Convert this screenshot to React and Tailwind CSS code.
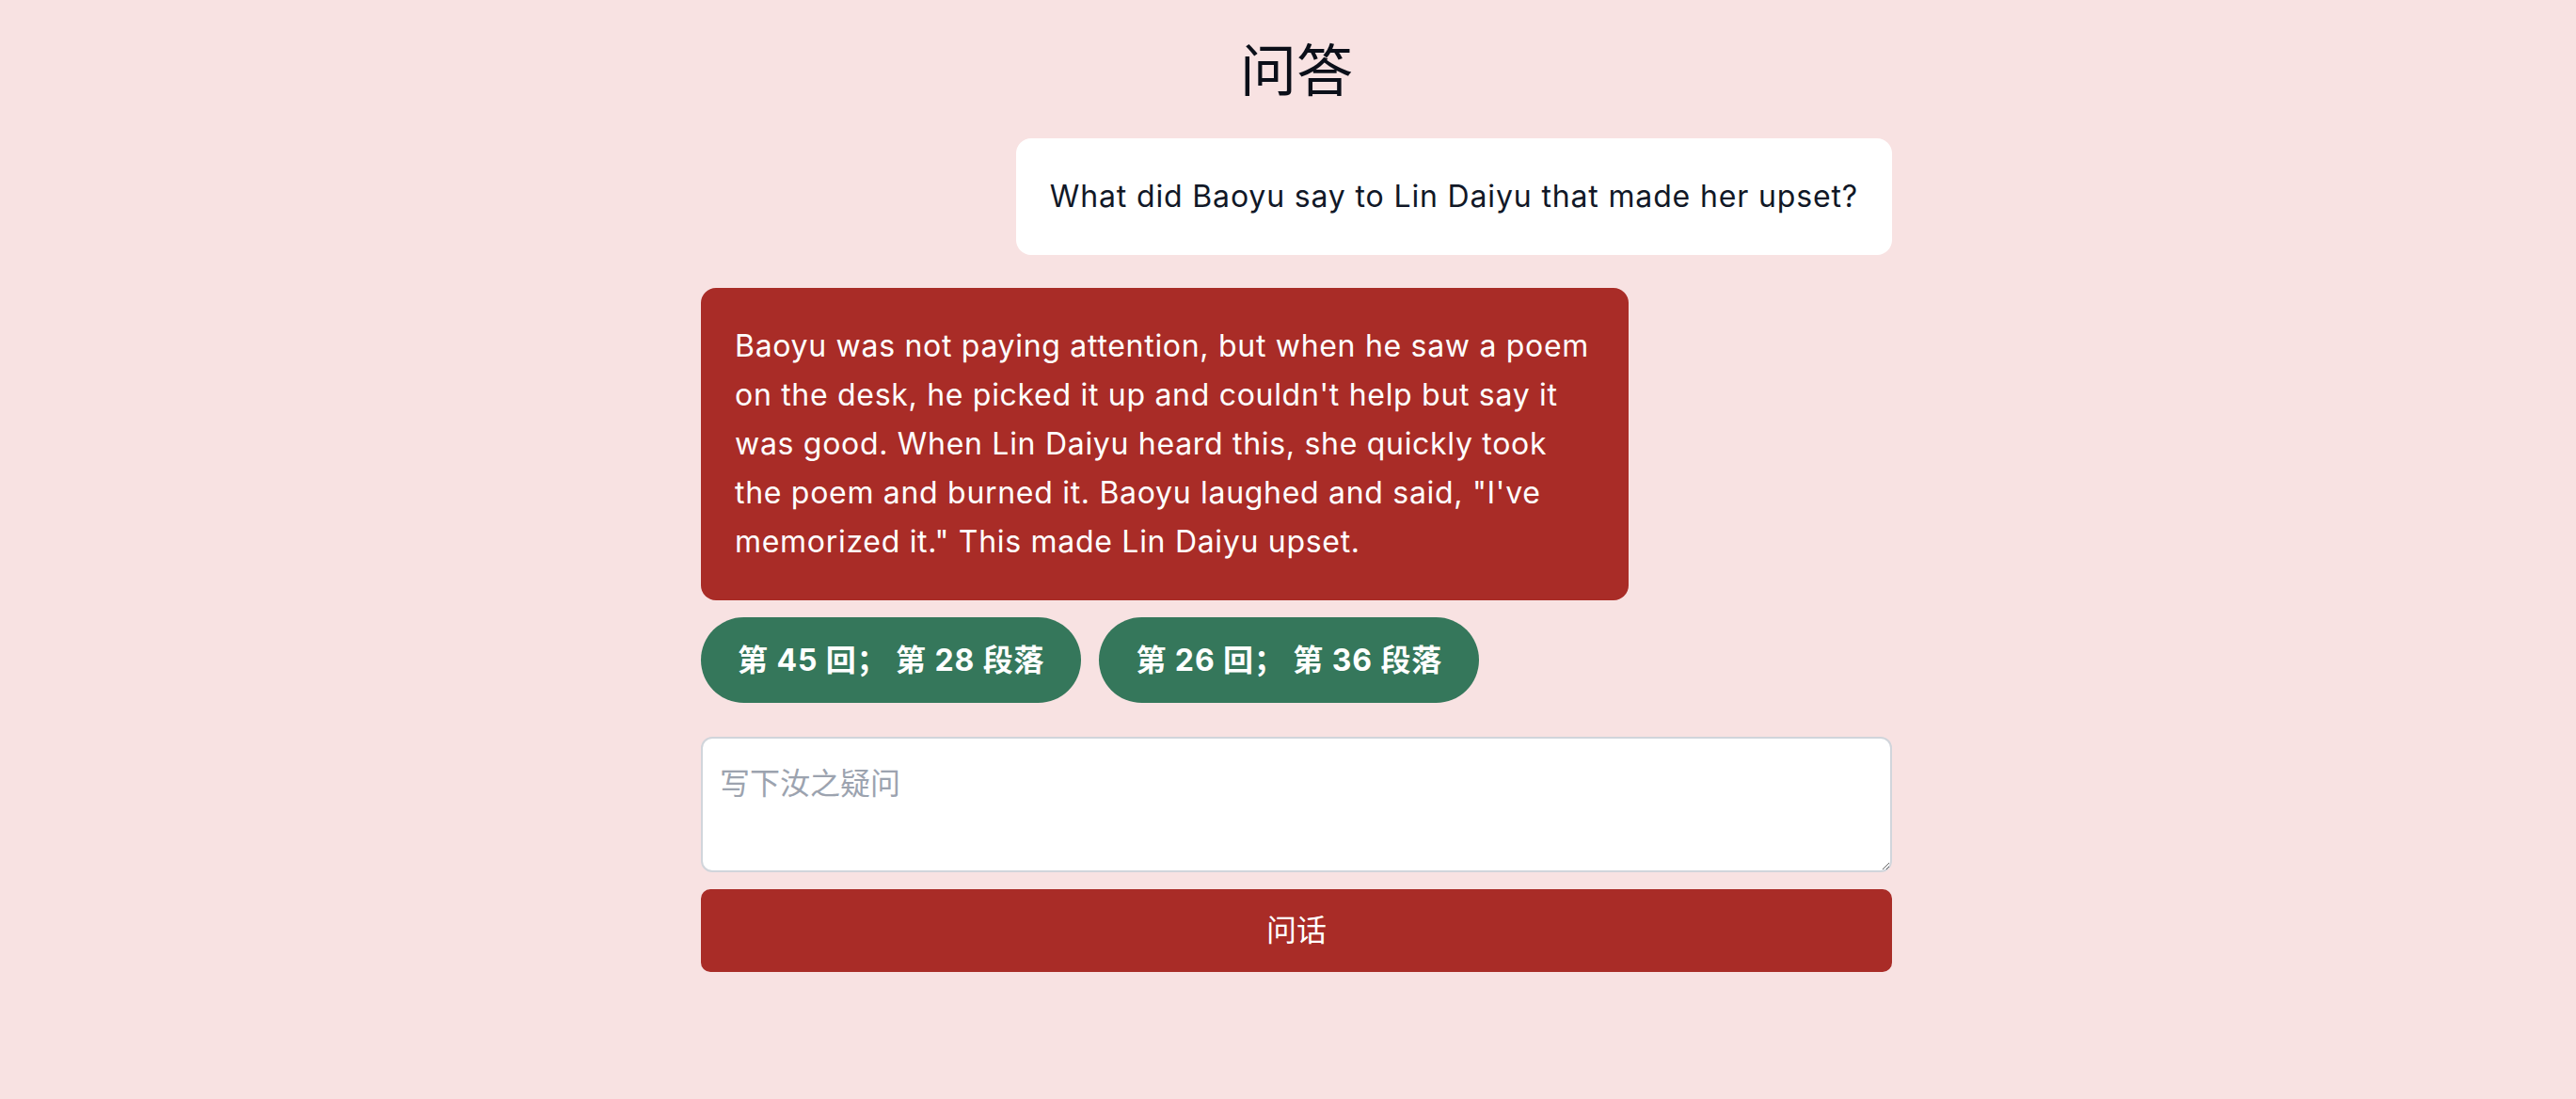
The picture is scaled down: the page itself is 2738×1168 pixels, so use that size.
import React from "react";

const lines = [
  "Baoyu was not paying attention, but when he saw a poem",
  "on the desk, he picked it up and couldn't help but say it",
  "was good. When Lin Daiyu heard this, she quickly took",
  "the poem and burned it. Baoyu laughed and said, \"I've",
  "memorized it.\" This made Lin Daiyu upset.",
];

export default function App() {
  return (
    <div
      className="min-h-[1168px] w-full bg-[#f8e2e2] text-[#111827]"
      style={{ fontFamily: 'Inter, "Noto Sans CJK SC", sans-serif' }}
    >
      <div className="mx-auto w-[1284px] pl-[18px] pt-[39px]">
        <h1 className="text-center text-[60px] leading-[72px] font-normal text-[#0b0f19]">问答</h1>

        <div className="mt-[36px] flex justify-end">
          <div className="rounded-[16px] bg-white p-[36px] text-[32px] leading-[52px] tracking-[0.85px]">
            What did Baoyu say to Lin Daiyu that made her upset?
          </div>
        </div>

        <div className="mt-[35px] flex justify-start">
          <div className="w-[986px] rounded-[16px] bg-[#a92c27] p-[36px] text-[32px] leading-[52px] tracking-[0.7px] text-white">
            {lines.map((l, i) => (
              <span key={i} className="block whitespace-nowrap">
                {l}
              </span>
            ))}
          </div>
        </div>

        <div className="mt-[18px] flex gap-[19px]">
          <div className="flex h-[91px] items-center rounded-full bg-[#35775b] px-[39px] text-[32px] font-bold tracking-[0.9px] text-white">
            第 45 回； 第 28 段落
          </div>
          <div className="flex h-[91px] items-center rounded-full bg-[#35775b] px-[39px] text-[32px] font-bold tracking-[0.9px] text-white">
            第 26 回； 第 36 段落
          </div>
        </div>

        <textarea
          className="mt-[36px] block h-[144px] w-full rounded-[12px] border-2 border-[#d1d5db] bg-white pl-[18px] pr-[20px] pt-[24px] pb-[16px] text-[32px] leading-[48px] placeholder:text-[#9ca3af]"
          placeholder="写下汝之疑问"
        />

        <button className="mt-[18px] flex h-[88px] w-full items-center justify-center rounded-[10px] bg-[#a92c27] text-[32px] text-white">
          问话
        </button>
      </div>
    </div>
  );
}
